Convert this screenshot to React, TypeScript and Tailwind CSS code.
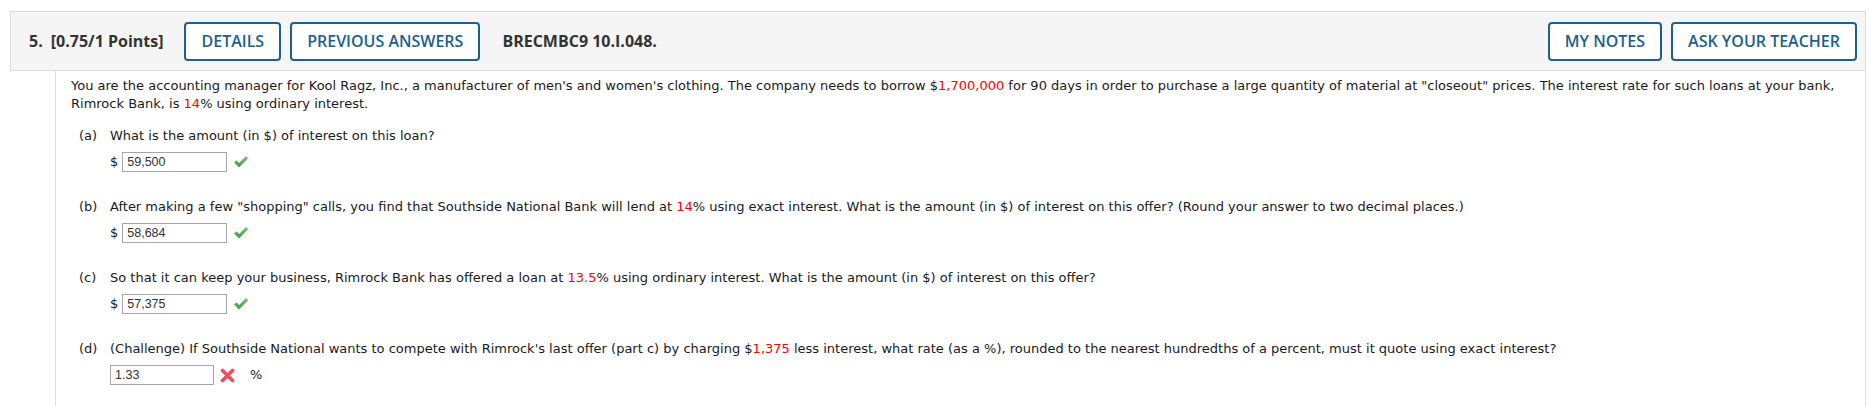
import React from "react";

const Red = ({ children }: { children: React.ReactNode }) => (
  <span className="text-[#ff0000]">{children}</span>
);

function Check() {
  return (
    <svg width="16" height="14" viewBox="0 0 16 14" className="ml-[6px]">
      <defs>
        <linearGradient id="ck" x1="0" y1="0" x2="0" y2="1">
          <stop offset="0" stopColor="#7cc576" />
          <stop offset="1" stopColor="#3f9a3f" />
        </linearGradient>
      </defs>
      <path d="M1 7.5 L3.5 5.2 L6 8 L13 1 L15.2 3.3 L6 12.6 Z" fill="url(#ck)" />
    </svg>
  );
}

function Cross() {
  return (
    <svg width="15" height="15" viewBox="0 0 15 15" className="ml-[6px]">
      <path d="M2.5 2.5 L12.5 12.5 M12.5 2.5 L2.5 12.5" stroke="#e8505b" strokeWidth="3.6" strokeLinecap="round" />
    </svg>
  );
}

function Answer({ value, width = "w-[105px]" }: { value: string; width?: string }) {
  return (
    <div
      className={`${width} h-[20px] border border-[#a6a6a6] px-[4px] flex items-center text-[12.5px] text-[#333] bg-white`}
      style={{ fontFamily: '"Liberation Sans", Arial, sans-serif' }}
    >
      {value}
    </div>
  );
}

function Part({ label, children, answer }: { label: string; children: React.ReactNode; answer: React.ReactNode }) {
  return (
    <div className="flex">
      <div className="w-[31px] shrink-0">{label}</div>
      <div className="flex flex-col">
        <div>{children}</div>
        <div className="mt-[7px] flex items-center">{answer}</div>
      </div>
    </div>
  );
}

function HeaderButton({ children }: { children: React.ReactNode }) {
  return (
    <button className="h-[39px] px-[15px] border-2 border-[#1d5f91] rounded-[4px] text-[16px] font-semibold text-[#1d5f91] bg-white">
      {children}
    </button>
  );
}

export default function App() {
  return (
    <div className="w-[1869px] h-[406px] bg-white pt-[11px] pl-[10px] pr-[3px]" style={{ fontFamily: '"Open Sans", sans-serif' }}>
      {/* question header */}
      <div className="h-[60px] bg-[#f5f5f5] border border-[#dddddd] flex items-center pl-[18px] pr-[8px]">
        <span className="text-[16px] font-bold text-[#333]">5.</span>
        <span className="ml-[8px] text-[16px] font-bold text-[#333]">[0.75/1 Points]</span>
        <div className="ml-[21px] flex gap-[9px]">
          <HeaderButton>DETAILS</HeaderButton>
          <HeaderButton>PREVIOUS ANSWERS</HeaderButton>
        </div>
        <span className="ml-[22px] text-[16px] font-bold text-[#333]">BRECMBC9 10.I.048.</span>
        <div className="ml-auto flex gap-[9px]">
          <HeaderButton>MY NOTES</HeaderButton>
          <HeaderButton>ASK YOUR TEACHER</HeaderButton>
        </div>
      </div>

      {/* question body */}
      <div
        className="ml-[45px] h-[336px] border-l border-r border-[#dddddd] pl-[15px] pr-[8px] pt-[6px] text-[13px] leading-[18px] text-[#1a1a1a]"
        style={{ fontFamily: '"DejaVu Sans", Verdana, sans-serif' }}
      >
        <p>
          You are the accounting manager for Kool Ragz, Inc., a manufacturer of men's and women's clothing. The company needs to
          borrow $<Red>1,700,000</Red> for 90 days in order to purchase a large quantity of material at "closeout" prices. The
          interest rate for such loans at your bank, Rimrock Bank, is <Red>14</Red>% using ordinary interest.
        </p>

        <div className="mt-[14px] ml-[8px] flex flex-col gap-[26px]">
          <Part
            label="(a)"
            answer={
              <>
                <span className="mr-[4px]">$</span>
                <Answer value="59,500" />
                <Check />
              </>
            }
          >
            What is the amount (in $) of interest on this loan?
          </Part>
          <Part
            label="(b)"
            answer={
              <>
                <span className="mr-[4px]">$</span>
                <Answer value="58,684" />
                <Check />
              </>
            }
          >
            After making a few "shopping" calls, you find that Southside National Bank will lend at <Red>14</Red>% using exact
            interest. What is the amount (in $) of interest on this offer? (Round your answer to two decimal places.)
          </Part>
          <Part
            label="(c)"
            answer={
              <>
                <span className="mr-[4px]">$</span>
                <Answer value="57,375" />
                <Check />
              </>
            }
          >
            So that it can keep your business, Rimrock Bank has offered a loan at <Red>13.5</Red>% using ordinary interest. What
            is the amount (in $) of interest on this offer?
          </Part>
          <Part
            label="(d)"
            answer={
              <>
                <Answer value="1.33" width="w-[104px]" />
                <Cross />
                <span className="ml-[15px]">%</span>
              </>
            }
          >
            (Challenge) If Southside National wants to compete with Rimrock's last offer (part c) by charging $<Red>1,375</Red>{" "}
            less interest, what rate (as a %), rounded to the nearest hundredths of a percent, must it quote using exact interest?
          </Part>
        </div>
      </div>
    </div>
  );
}
